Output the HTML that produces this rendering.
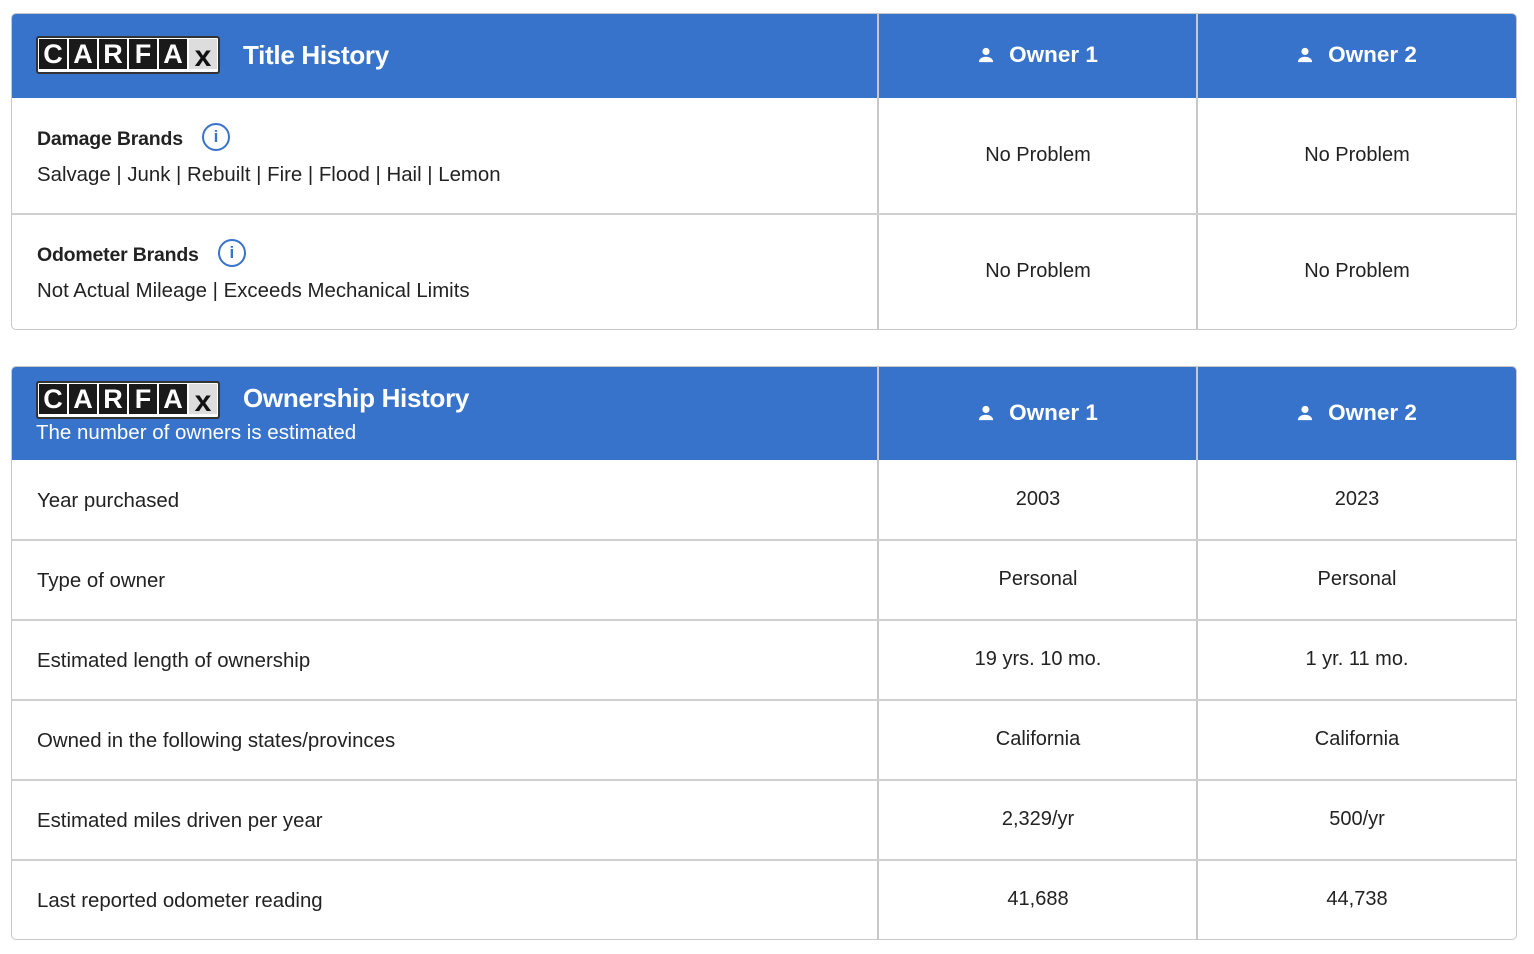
<!DOCTYPE html>
<html><head><style>
body{margin:0;background:#fff;font-family:"Liberation Sans",Arial,sans-serif;color:#222;}
.t{position:absolute;left:11px;width:1504px;border:1px solid #c8c8c8;border-radius:5px;overflow:hidden;}
.hd{position:absolute;left:0;top:0;width:1504px;background:#3873cb;}
.vl{position:absolute;top:0;bottom:0;width:2px;background:#c8c8c8;}
.hl{position:absolute;left:0;width:1504px;height:2px;background:#d0d0d0;}
.c{position:absolute;width:318px;text-align:center;font-size:20px;}
.l{position:absolute;left:25px;font-size:20.4px;}
.ow{position:absolute;width:318px;text-align:center;color:#fff;font-weight:bold;font-size:22.5px;}
.ow svg{vertical-align:-1px;margin-right:15px}
.logo{position:absolute;left:24px;display:flex;border:2px solid #333;border-radius:3px;background:#fff;padding:1px;height:32px;}
.logo span{width:28px;height:30px;background:#1a1a1a;color:#fff;font-weight:bold;font-size:27px;text-align:center;line-height:31px;margin-right:2px;}
.logo span.x{background:#ddd;color:#111;font-size:30px;line-height:36px;margin:0}
.hdt{position:absolute;left:231px;color:#fff;font-weight:bold;font-size:26px;letter-spacing:-0.3px}
.b{font-weight:bold;font-size:19.5px;letter-spacing:-0.2px}
.info{display:inline-block;width:28px;height:28px;border:2.5px solid #3873cb;border-radius:50%;box-sizing:border-box;color:#3873cb;text-align:center;font-size:17px;line-height:23px;vertical-align:middle;margin-left:19px;position:relative;top:-3px}
</style></head><body>
<div class="t" style="top:13px;height:315px">
 <div class="hd" style="height:84px"></div>
 <div class="logo" style="top:22px"><span>C</span><span>A</span><span>R</span><span>F</span><span>A</span><span class="x">x</span></div>
 <div class="hdt" style="top:26px">Title History</div>
 <div class="ow" style="left:867px;top:28px"><svg width="16" height="16" viewBox="0 0 18 18"><circle cx="9" cy="5" r="4" fill="#fff"/><path d="M1 17c0-4 4-6 8-6s8 2 8 6z" fill="#fff"/></svg>Owner 1</div>
 <div class="ow" style="left:1186px;top:28px"><svg width="16" height="16" viewBox="0 0 18 18"><circle cx="9" cy="5" r="4" fill="#fff"/><path d="M1 17c0-4 4-6 8-6s8 2 8 6z" fill="#fff"/></svg>Owner 2</div>
 <div class="vl" style="left:865px"></div><div class="vl" style="left:1184px"></div>
 <div class="hl" style="top:199px"></div>
 <div class="l b" style="top:112px">Damage Brands<span class="info">i</span></div>
 <div class="l" style="top:150px">Salvage | Junk | Rebuilt | Fire | Flood | Hail | Lemon</div>
 <div class="c" style="left:867px;top:130px">No Problem</div><div class="c" style="left:1186px;top:130px">No Problem</div>
 <div class="l b" style="top:228px">Odometer Brands<span class="info">i</span></div>
 <div class="l" style="top:266px">Not Actual Mileage | Exceeds Mechanical Limits</div>
 <div class="c" style="left:867px;top:246px">No Problem</div><div class="c" style="left:1186px;top:246px">No Problem</div>
</div>
<div class="t" style="top:366px;height:572px">
 <div class="hd" style="height:93px"></div>
 <div class="logo" style="top:14px"><span>C</span><span>A</span><span>R</span><span>F</span><span>A</span><span class="x">x</span></div>
 <div class="hdt" style="top:16px">Ownership History</div>
 <div style="position:absolute;left:24px;top:54px;color:#fff;font-size:20.5px">The number of owners is estimated</div>
 <div class="ow" style="left:867px;top:33px"><svg width="16" height="16" viewBox="0 0 18 18"><circle cx="9" cy="5" r="4" fill="#fff"/><path d="M1 17c0-4 4-6 8-6s8 2 8 6z" fill="#fff"/></svg>Owner 1</div>
 <div class="ow" style="left:1186px;top:33px"><svg width="16" height="16" viewBox="0 0 18 18"><circle cx="9" cy="5" r="4" fill="#fff"/><path d="M1 17c0-4 4-6 8-6s8 2 8 6z" fill="#fff"/></svg>Owner 2</div>
 <div class="vl" style="left:865px"></div><div class="vl" style="left:1184px"></div>
 <div class="hl" style="top:172px"></div><div class="hl" style="top:252px"></div><div class="hl" style="top:332px"></div><div class="hl" style="top:412px"></div><div class="hl" style="top:492px"></div>
 <div class="l" style="top:123px">Year purchased</div><div class="c" style="left:867px;top:121px">2003</div><div class="c" style="left:1186px;top:121px">2023</div>
 <div class="l" style="top:203px">Type of owner</div><div class="c" style="left:867px;top:201px">Personal</div><div class="c" style="left:1186px;top:201px">Personal</div>
 <div class="l" style="top:283px">Estimated length of ownership</div><div class="c" style="left:867px;top:281px">19 yrs. 10 mo.</div><div class="c" style="left:1186px;top:281px">1 yr. 11 mo.</div>
 <div class="l" style="top:363px">Owned in the following states/provinces</div><div class="c" style="left:867px;top:361px">California</div><div class="c" style="left:1186px;top:361px">California</div>
 <div class="l" style="top:443px">Estimated miles driven per year</div><div class="c" style="left:867px;top:441px">2,329/yr</div><div class="c" style="left:1186px;top:441px">500/yr</div>
 <div class="l" style="top:523px">Last reported odometer reading</div><div class="c" style="left:867px;top:521px">41,688</div><div class="c" style="left:1186px;top:521px">44,738</div>
</div>
</body></html>
